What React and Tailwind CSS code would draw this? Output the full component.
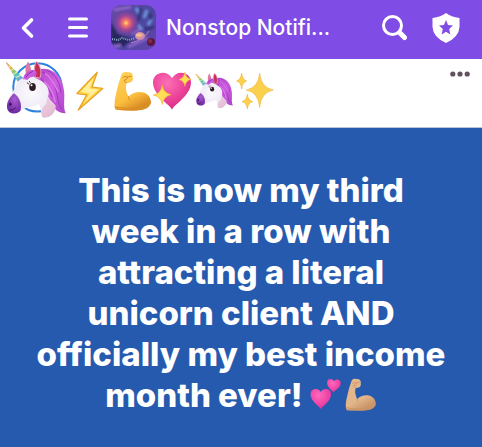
import React, { useId } from "react";

function Unicorn({ ring = false, className }) {
  const id = useId();
  return (
    <svg viewBox="15 15 184 174" className={className} role="img" aria-label="Unicorn">
      <defs>
        <linearGradient id={`${id}horn`} x1="0" y1="0" x2="1" y2="1">
          <stop offset="0" stopColor="#d9a07c" />
          <stop offset=".25" stopColor="#f0b25a" />
          <stop offset=".45" stopColor="#8ccb74" />
          <stop offset=".65" stopColor="#4fc4c9" />
          <stop offset="1" stopColor="#a98be0" />
        </linearGradient>
        <linearGradient id={`${id}mane`} x1="0" y1="0" x2="1" y2="1">
          <stop offset="0" stopColor="#a843c4" />
          <stop offset=".5" stopColor="#cf5fe0" />
          <stop offset="1" stopColor="#ad45cb" />
        </linearGradient>
        <radialGradient id={`${id}face`} cx=".5" cy=".4" r=".75">
          <stop offset="0" stopColor="#fbf9fd" />
          <stop offset=".65" stopColor="#ece7f3" />
          <stop offset="1" stopColor="#cabfd6" />
        </radialGradient>
        <radialGradient id={`${id}nose`} cx=".55" cy=".3" r=".7">
          <stop offset="0" stopColor="#a95ad2" />
          <stop offset="1" stopColor="#6c2aa0" />
        </radialGradient>
      </defs>
      {ring && <circle cx="113" cy="94" r="73" fill="#fff" stroke="#2f80dc" strokeWidth="6" />}
      <path d="M96 50C112 36 142 32 163 48C184 63 193 88 194 116C194 137 191 156 198 172C184 172 172 168 165 158C150 148 128 116 118 88Z" fill={`url(#${id}mane)`} />
      <path d="M127 48C148 54 161 74 168 98C175 121 173 143 187 161M142 43C169 55 181 82 184 110M124 66C136 90 151 103 158 123" fill="none" stroke="#9a35b8" strokeWidth="3" />
      <path d="M136 52C159 67 165 90 176 108M134 76C149 91 161 109 167 139" fill="none" stroke="#e07fec" strokeWidth="4" />
      <path d="M20 18Q17 17 19 22L54 78L72 67Z" fill={`url(#${id}horn)`} />
      <path d="M26 32L33 28M33 43L43 37M40 54L53 47M47 65L63 57" stroke="#fff3b8" strokeWidth="3" />
      <path d="M54 76C69 62 94 58 117 70C144 84 151 103 145 121C150 137 164 141 168 151C165 179 145 188 128 184C121 167 124 153 117 145C96 153 74 155 62 165C47 178 21 174 21 151C21 126 43 105 49 87Z" fill={`url(#${id}face)`} />
      <path d="M144 123C148 137 159 142 168 151C165 178 145 188 128 184C120 164 130 153 139 145Z" fill="#eab3cd" opacity=".65" />
      <path d="M42 112C58 122 68 146 61 165C46 178 21 175 21 151C21 136 31 122 42 112Z" fill={`url(#${id}nose)`} />
      <ellipse cx="31" cy="145" rx="4" ry="5" fill="#42105f" />
      <path d="M29 162Q39 166 47 155" fill="none" stroke="#46145f" strokeWidth="3" />
      <path d="M81 60C74 45 76 28 85 16C91 31 98 42 90 56Z" fill="#df7aa3" />
      <path d="M107 64C101 45 103 28 110 16C123 30 127 50 120 66Z" fill="#c92f55" stroke="#e9a3bb" strokeWidth="3" />
      <path d="M70 70C71 53 84 43 101 41C111 44 113 54 106 61C96 62 89 63 82 72Q75 68 70 70Z" fill={`url(#${id}mane)`} />
      <path d="M78 64Q84 51 99 46" fill="none" stroke="#8c2bab" strokeWidth="3" />
      <ellipse cx="98" cy="93" rx="10" ry="12" fill="#2c1a25" />
      <circle cx="95" cy="88" r="3" fill="#fff" />
      <path d="M87 84L81 80M91 80L88 75" stroke="#39232e" strokeWidth="3" />
    </svg>
  );
}

function Bolt({ className }) {
  return (
    <svg viewBox="228 44 88 124" className={className} role="img" aria-label="Lightning">
      <path d="M295 47L231 114L262 118L235 166L312 98L278 94Z" fill="#ffd84a" stroke="#e9a126" strokeWidth="4" strokeLinejoin="round" />
      <path d="M283 65L243 109L272 113L253 142L298 101L270 98Z" fill="#ffef9c" />
    </svg>
  );
}

function Arm({ light, mid, dark, className }) {
  const id = useId();
  return (
    <svg viewBox="0 0 114 120" className={className} role="img" aria-label="Flexed arm">
      <defs>
        <linearGradient id={id} x1="0" y1="0" x2=".5" y2="1">
          <stop offset="0" stopColor={light} />
          <stop offset=".7" stopColor={mid} />
          <stop offset="1" stopColor={dark} />
        </linearGradient>
      </defs>
      <path d="M20 19C22 6 30 1 40 4C52 2 58 9 56 19C59 31 50 36 38 36C33 49 37 63 43 77C56 62 84 58 99 70C114 82 114 101 99 110C79 121 31 119 6 117C0 112 1 92 4 78C9 56 14 33 20 19Z" fill={`url(#${id})`} />
      <path d="M4 108Q8 117 30 116Q78 121 99 110Q109 104 110 92Q99 108 75 110Q31 115 4 108ZM43 77Q40 83 48 88M26 20Q34 13 40 18Q42 25 31 28M40 18L52 16M38 35Q31 34 30 29" fill="none" stroke={dark} strokeWidth="3" strokeLinecap="round" />
    </svg>
  );
}

const HEART = "M60 115C52 98 3 73 3 33C3 3 43 -7 60 20C77 -7 117 3 117 33C117 73 68 98 60 115Z";

function SparklingHeart({ className }) {
  const id = useId();
  return (
    <svg viewBox="0 0 120 118" className={className} role="img" aria-label="Sparkling heart">
      <defs>
        <radialGradient id={id} cx=".38" cy=".28" r=".75">
          <stop offset="0" stopColor="#fb70b5" />
          <stop offset=".55" stopColor="#ed459b" />
          <stop offset="1" stopColor="#d92885" />
        </radialGradient>
      </defs>
      <path d={HEART} fill={`url(#${id})`} />
      <path d="M31 41Q34 65 57 70Q34 76 31 99Q27 76 4 71Q27 66 31 41Z" fill="#ffdf57" stroke="#ecae36" strokeWidth="2" />
      <path d="M99 3Q101 20 117 24Q101 28 99 45Q96 28 81 25Q96 20 99 3Z" fill="#ffdf57" stroke="#ecae36" strokeWidth="2" />
    </svg>
  );
}

function Sparkles({ className }) {
  return (
    <svg viewBox="0 0 114 112" className={className} role="img" aria-label="Sparkles">
      <g fill="#fbd04c" stroke="#eeb63c" strokeWidth="2">
        <path d="M71 3Q75 46 112 53Q75 60 71 105Q67 60 31 53Q67 46 71 3Z" />
        <path d="M17 2Q19 22 32 26Q19 29 17 50Q15 29 2 26Q15 22 17 2Z" />
        <path d="M34 66Q36 84 50 88Q36 91 34 110Q32 91 18 88Q32 84 34 66Z" />
      </g>
    </svg>
  );
}

function TwoHearts({ className }) {
  const id = useId();
  return (
    <svg viewBox="0 0 96 94" className={className} role="img" aria-label="Two hearts">
      <defs>
        <radialGradient id={id} cx=".4" cy=".3" r=".75">
          <stop offset="0" stopColor="#ff69bd" />
          <stop offset="1" stopColor="#e42e98" />
        </radialGradient>
      </defs>
      <path d={HEART} transform="translate(0 30) scale(.54)" fill={`url(#${id})`} />
      <path d={HEART} transform="translate(51 0) rotate(4) scale(.36)" fill={`url(#${id})`} />
    </svg>
  );
}

function GalaxyAvatar() {
  return (
    <svg viewBox="0 0 45 45" className="size-[45px] shrink-0 rounded-[10px]" role="img" aria-label="Group picture">
      <defs>
        <linearGradient id="sky" x1="0" y1="0" x2="1" y2="1">
          <stop offset="0" stopColor="#6a4aa8" />
          <stop offset=".5" stopColor="#4b479f" />
          <stop offset="1" stopColor="#6544ad" />
        </linearGradient>
        <radialGradient id="glow">
          <stop offset="0" stopColor="#ffe06b" />
          <stop offset=".2" stopColor="#f67867" />
          <stop offset=".5" stopColor="#b64792" stopOpacity=".85" />
          <stop offset="1" stopColor="#783c9e" stopOpacity="0" />
        </radialGradient>
        <filter id="mist"><feGaussianBlur stdDeviation="1" /></filter>
      </defs>
      <path d="M0 0H45V45H0Z" fill="url(#sky)" />
      <g filter="url(#mist)" fill="none">
        <path d="M0 17L7 29L22 34L12 42L0 38Z" fill="#28285f" />
        <path d="M25 3L29 10M36 5L33 13M41 13L37 20M27 20L31 25" stroke="#6d9bdc" strokeWidth="3" />
        <path d="M3 5L20 2M20 29L30 24M17 42L37 33M2 42L10 40" stroke="#8d65c6" strokeWidth="3" />
        <path d="M30 3L27 16M39 8L40 15M33 24L43 22" stroke="#343378" strokeWidth="3" />
      </g>
      <circle cx="15" cy="18" r="14" fill="url(#glow)" />
      <path d="M1 34L7 35L11 33L18 35L24 33" fill="none" stroke="#8faac4" strokeWidth="2" strokeDasharray="1 1" />
      <ellipse cx="29" cy="31" rx="5" ry="4" fill="#d993a0" />
      <ellipse cx="28" cy="30" rx="3" ry="1.5" fill="#efbf94" />
      <path d="M20 38Q33 35 38 26" fill="none" stroke="#b47fbd" />
      <circle cx="40" cy="37" r="4" fill="#5a1741" />
      <circle cx="39" cy="36" r="2" fill="#8b2c48" />
    </svg>
  );
}

export default function App() {
  return (
    <div className="flex min-h-screen flex-col bg-[#265aaf] font-[Inter,sans-serif]">
      <header className="flex h-[59px] items-center bg-[#804ce6] pr-[22px] pb-1 pl-5 text-white">
        <button type="button" aria-label="Back" className="flex w-12 shrink-0">
          <svg viewBox="0 0 16 22" className="h-[22px] w-4"><path d="M11.5 3L3.5 11L11.5 19" fill="none" stroke="currentColor" strokeWidth="3.6" strokeLinecap="round" strokeLinejoin="round" /></svg>
        </button>
        <button type="button" aria-label="Menu" className="mr-[23px] shrink-0">
          <svg viewBox="0 0 20 22" className="h-[22px] w-5"><path d="M1.5 2H18.5M1.5 10.5H18.5M1.5 19H18.5" stroke="currentColor" strokeWidth="3" strokeLinecap="round" /></svg>
        </button>
        <GalaxyAvatar />
        <h1 className="ml-2.5 min-w-0 flex-1 text-[21px] leading-7 font-medium whitespace-nowrap">Nonstop Notifi...</h1>
        <button type="button" aria-label="Search" className="mr-6 shrink-0">
          <svg viewBox="0 0 26 26" className="size-[26px]"><circle cx="10.5" cy="10.5" r="9" fill="none" stroke="currentColor" strokeWidth="3" /><path d="M18 18L22.5 22.5" stroke="currentColor" strokeWidth="5" strokeLinecap="round" /></svg>
        </button>
        <button type="button" aria-label="Admin tools" className="shrink-0">
          <svg viewBox="0 0 28 30" className="h-[30px] w-7"><path d="M14 0Q19 4 27.5 5V14Q27 24 14 30Q1 24 .5 14V5Q9 4 14 0Z" fill="currentColor" /><path d="M14 7L16 12L21 12.5L17.2 16L18.3 21.5L14 18.7L9.7 21.5L10.8 16L7 12.5L12 12Z" fill="#804ce6" /></svg>
        </button>
      </header>

      <section className="flex h-[69px] items-start border-b border-[#b9c4da] bg-white pr-3 pl-[5px]">
        <Unicorn ring className="mt-0.5 h-[58px] w-[61px] shrink-0" />
        <div className="flex items-center pt-3 pl-2.5">
          <Bolt className="mr-2.5 h-10 w-7" />
          <Arm light="#ffd45a" mid="#fbbd3e" dark="#d98d25" className="h-10 w-[38px]" />
          <SparklingHeart className="h-10 w-10" />
          <Unicorn className="mx-[3px] h-9 w-[38px]" />
          <Sparkles className="h-[38px] w-[38px]" />
        </div>
        <button type="button" aria-label="More options" className="mt-3 ml-auto">
          <svg viewBox="0 0 20 6" className="h-1.5 w-5" fill="#65505f"><circle cx="2.8" cy="3" r="2.6" /><circle cx="10" cy="3" r="2.6" /><circle cx="17.2" cy="3" r="2.6" /></svg>
        </button>
      </section>

      <main className="px-6 pt-[42px] text-center text-white">
        <p className="text-[33px] leading-[41px] font-extrabold">
          This is now my third<br />
          week in a row with<br />
          attracting a literal<br />
          unicorn client AND<br />
          officially my best income<br />
          month ever!{" "}
          <TwoHearts className="inline h-8 w-8 align-[-3px]" />
          <Arm light="#e5b98b" mid="#e2b68b" dark="#c99468" className="ml-[3px] inline h-[33px] w-8 align-[-4px]" />
        </p>
      </main>
    </div>
  );
}
